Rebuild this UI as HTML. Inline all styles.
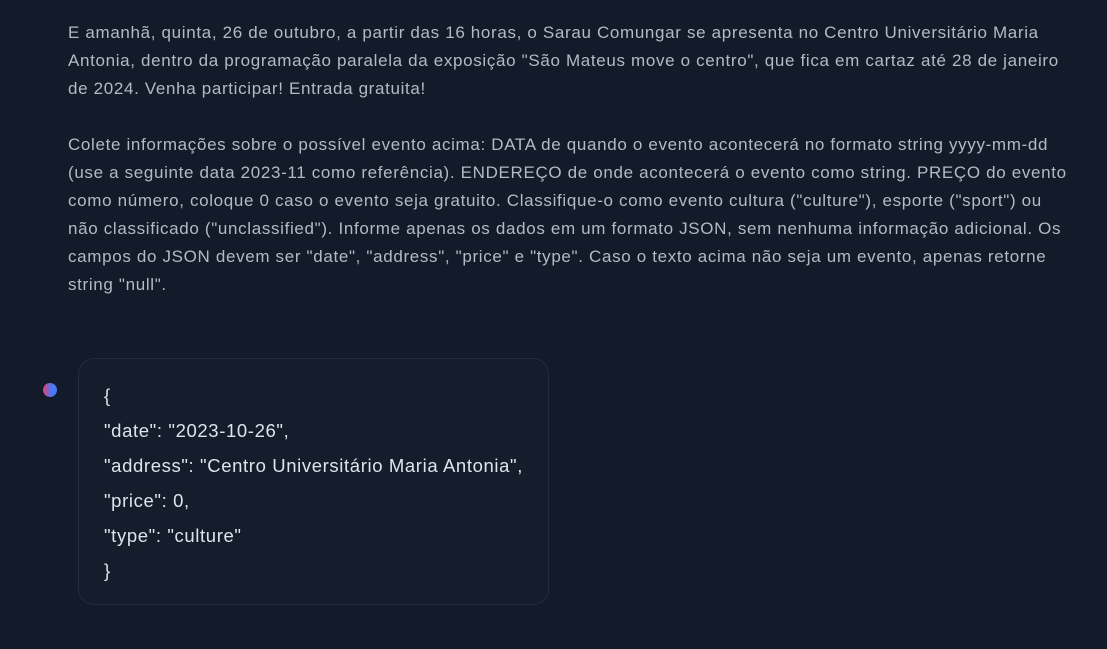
<!DOCTYPE html>
<html><head><meta charset="utf-8"><style>
body{margin:0;background:#131a29;width:1107px;height:649px;overflow:hidden;font-family:"Liberation Sans",sans-serif;}
.p{position:absolute;left:68px;top:19px;color:#b3bac5;font-size:17px;letter-spacing:0.66px;line-height:28px;white-space:nowrap;}
.box{position:absolute;left:78px;top:358px;width:471px;height:247px;border:1px solid #222b3b;border-radius:16px;background:#151d2c;box-sizing:border-box;}
.j{position:absolute;left:104px;top:378px;color:#dfe3ea;font-size:18.5px;letter-spacing:0.62px;line-height:35px;white-space:nowrap;}
.dot{position:absolute;left:43px;top:383px;width:14px;height:14px;border-radius:50%;background:linear-gradient(90deg,#e5406a,#4a78f5 60%);}
</style></head><body>
<div class="p">E amanhã, quinta, 26 de outubro, a partir das 16 horas, o Sarau Comungar se apresenta no Centro Universitário Maria<br>Antonia, dentro da programação paralela da exposição "São Mateus move o centro", que fica em cartaz até 28 de janeiro<br>de 2024. Venha participar! Entrada gratuita!<br><br>Colete informações sobre o possível evento acima: DATA de quando o evento acontecerá no formato string yyyy-mm-dd<br>(use a seguinte data 2023-11 como referência). ENDEREÇO de onde acontecerá o evento como string. PREÇO do evento<br>como número, coloque 0 caso o evento seja gratuito. Classifique-o como evento cultura ("culture"), esporte ("sport") ou<br>não classificado ("unclassified"). Informe apenas os dados em um formato JSON, sem nenhuma informação adicional. Os<br>campos do JSON devem ser "date", "address", "price" e "type". Caso o texto acima não seja um evento, apenas retorne<br>string "null".</div>
<div class="dot"></div>
<div class="box"></div>
<div class="j">{<br>"date": "2023-10-26",<br>"address": "Centro Universitário Maria Antonia",<br>"price": 0,<br>"type": "culture"<br>}</div>
</body></html>
